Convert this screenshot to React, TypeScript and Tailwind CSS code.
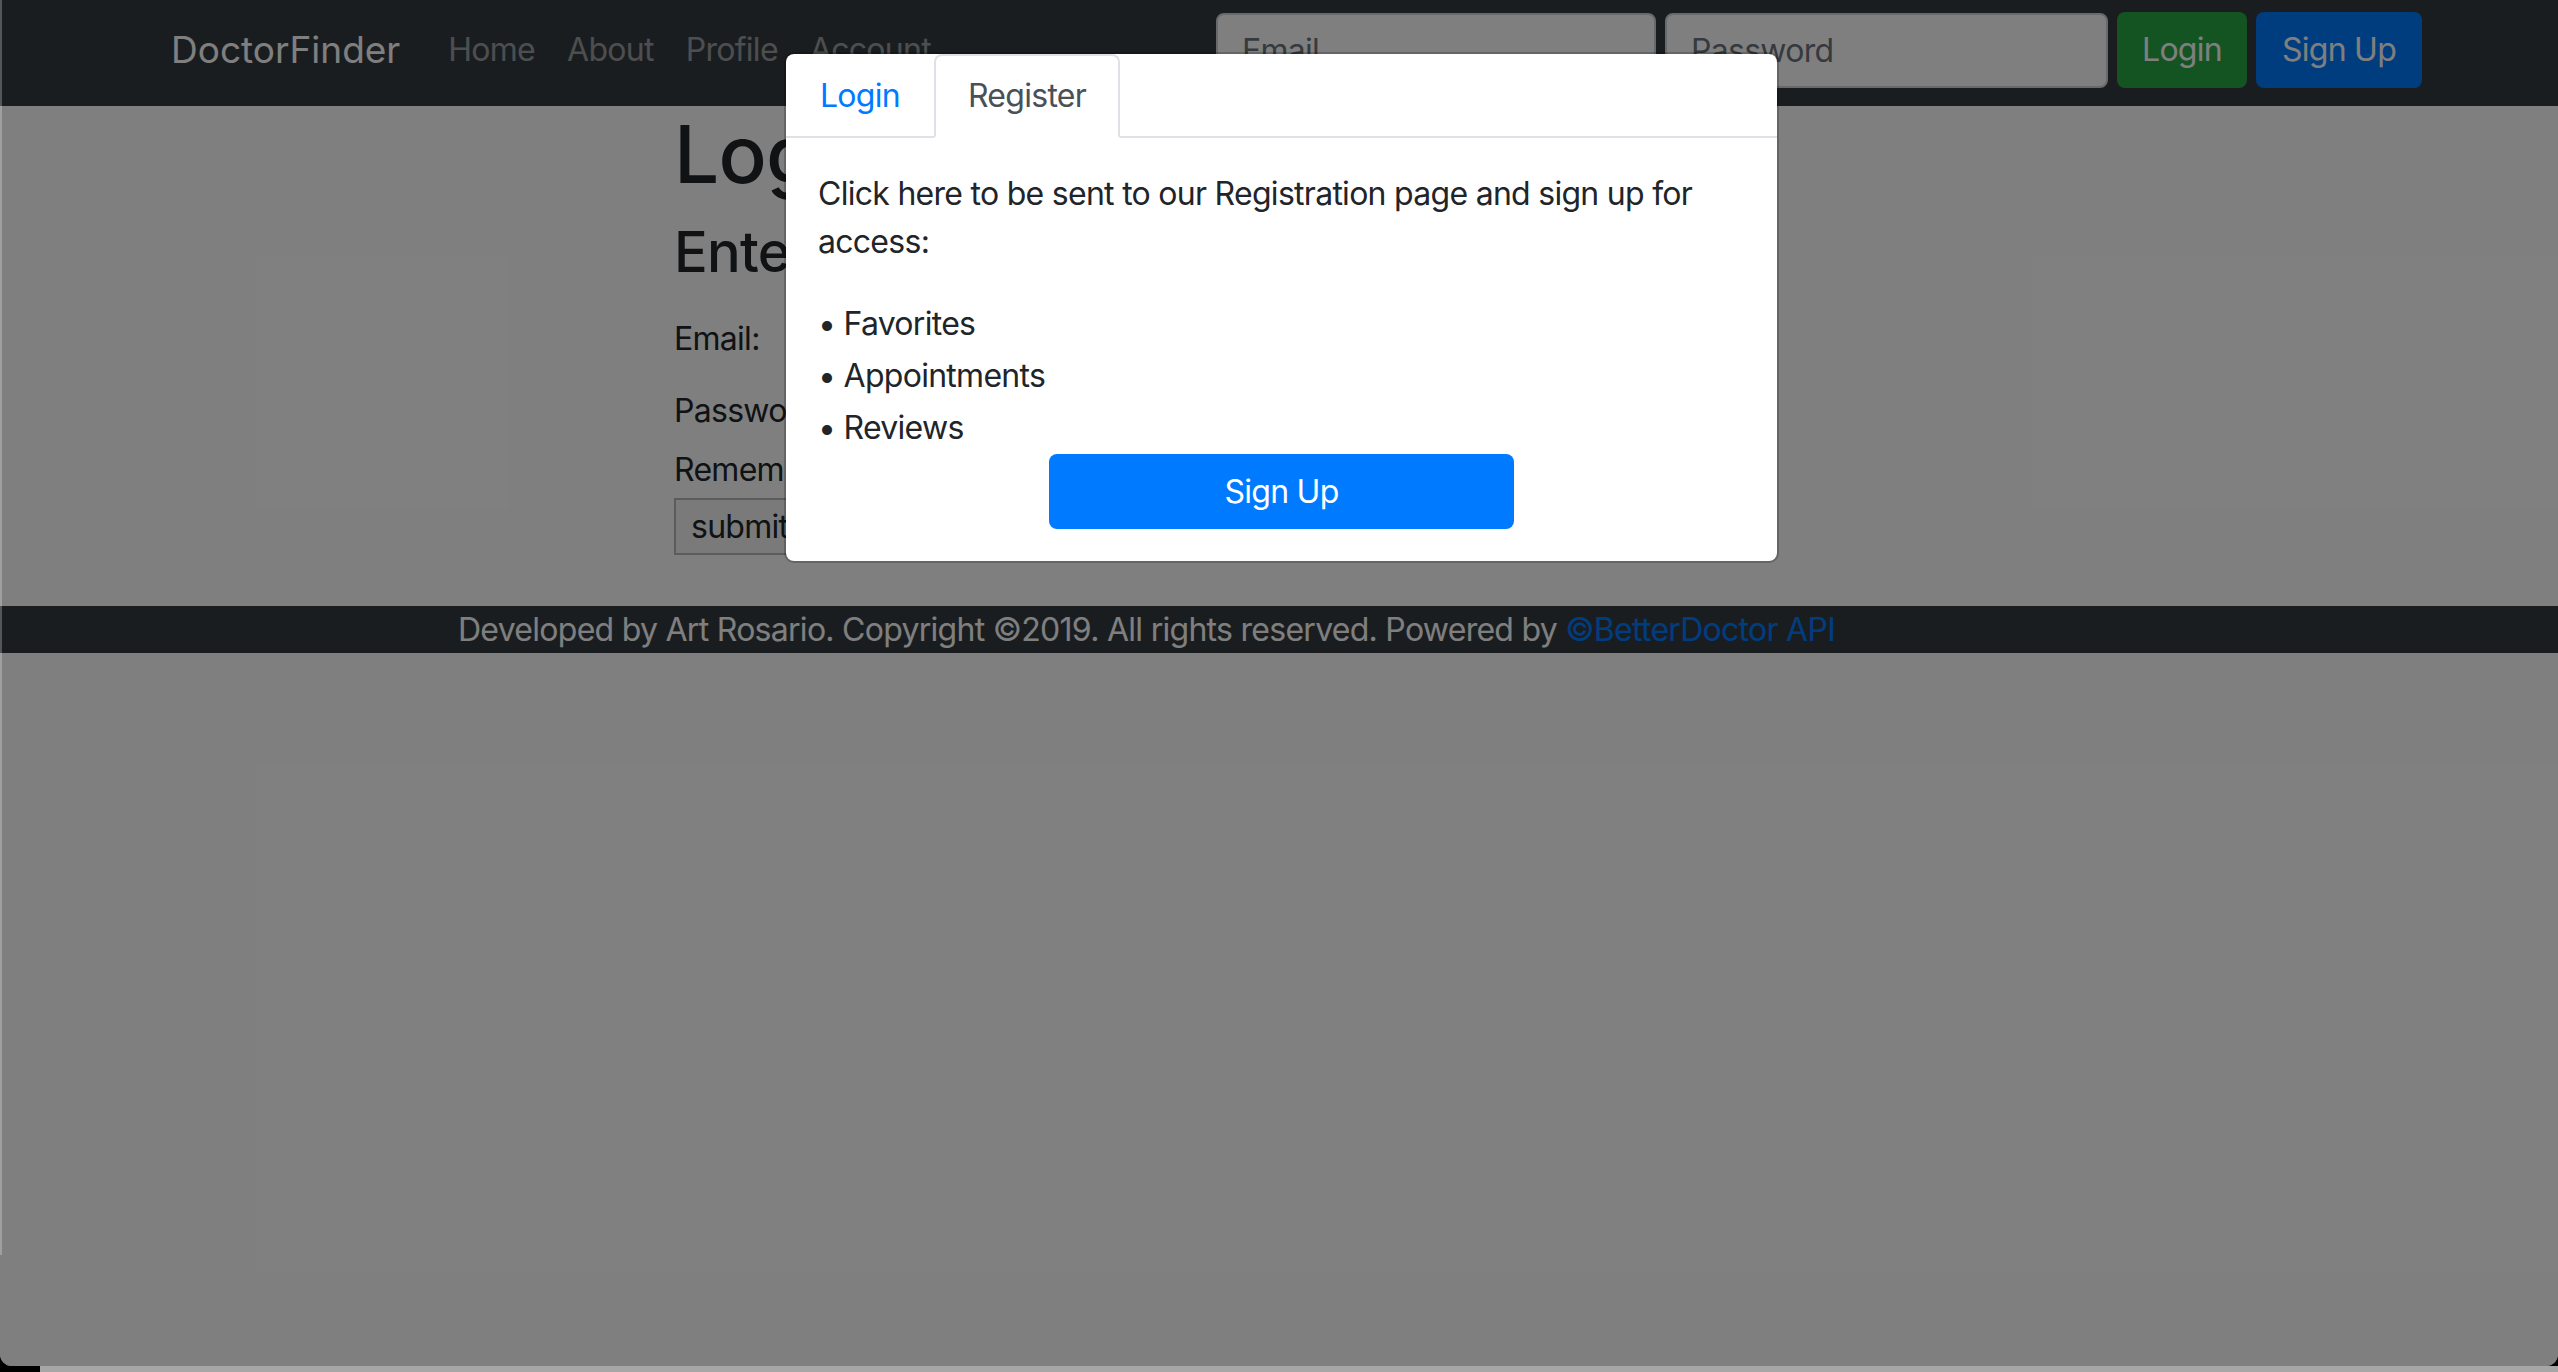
import { memo } from 'react'

const FONT = "font-['Inter',sans-serif] tracking-[-0.045em]"

const NAV_LINKS = ['Home', 'About', 'Profile', 'Account']
const PERKS = ['Favorites', 'Appointments', 'Reviews']

const NavBar = memo(function NavBar() {
  return (
    <nav className="flex h-[106px] items-center bg-[#343a40] pb-[6px] pl-[171px] pr-[136px]">
      <a className="mr-[32px] text-[37px] leading-[48px] tracking-normal text-white">DoctorFinder</a>
      <ul className="flex">
        {NAV_LINKS.map((label) => (
          <li key={label} className="px-[16px] text-[32px] leading-[48px] text-white/50">
            {label}
          </li>
        ))}
      </ul>
      <form className="ml-auto flex items-center gap-[9px]">
        <input
          placeholder="Email"
          className="h-[75px] w-[440px] rounded-[8px] border-2 border-[#ced4da] bg-white px-[24px] text-[32px] text-[#495057] placeholder:text-[#6c757d]"
        />
        <input
          placeholder="Password"
          className="h-[75px] w-[443px] rounded-[8px] border-2 border-[#ced4da] bg-white px-[24px] text-[32px] text-[#495057] placeholder:text-[#6c757d]"
        />
        <button type="button" className="h-[76px] w-[130px] rounded-[8px] bg-[#28a745] text-[32px] text-white">
          Login
        </button>
        <button type="button" className="h-[76px] w-[166px] rounded-[8px] bg-[#007bff] text-[32px] text-white">
          Sign Up
        </button>
      </form>
    </nav>
  )
})

const LoginPage = memo(function LoginPage() {
  return (
    <main className="pl-[674px] text-[#212529]">
      <h1 className="mb-[17px] text-[80px] font-medium leading-[96px]">Login</h1>
      <h3 className="text-[56px] font-medium leading-[67px]">Enter your credentials</h3>

      <div className="mt-[29px] flex h-[48px] items-center text-[32px]">
        <label>Email:</label>
        <input className="ml-[40px] h-[48px] w-[400px] border-2 border-[#767676]" />
      </div>
      <div className="mt-[24px] flex h-[48px] items-center text-[32px]">
        <label>Password:</label>
        <input type="password" className="ml-[40px] h-[48px] w-[400px] border-2 border-[#767676]" />
      </div>
      <div className="mt-[11px] flex h-[48px] items-center text-[32px]">
        <label>Remember me:</label>
        <input type="checkbox" className="ml-[16px] size-[26px]" />
      </div>
      <button
        type="button"
        className="mt-[4px] h-[57px] w-[170px] border-2 border-[#b8b8b8] bg-[#f4f4f4] pl-[15px] text-left text-[32px] text-[#212529]"
      >
        submit
      </button>
    </main>
  )
})

const Footer = memo(function Footer() {
  return (
    <footer className="mt-[51px] h-[47px] bg-[#343a40] pl-[458px] text-[32px] leading-[47px] text-white">
      Developed by Art Rosario. Copyright ©2019. All rights reserved. Powered by{' '}
      <a className="text-[#007bff]">©BetterDoctor API</a>
    </footer>
  )
})

const RegisterModal = memo(function RegisterModal() {
  return (
    <div className="absolute left-[784px] top-[52px] w-[995px] rounded-[10px] border-2 border-black/20 bg-white bg-clip-padding">
      <ul className="flex border-b-2 border-[#dee2e6] text-[32px] leading-[48px]">
        <li className="-mb-[2px] rounded-t-[8px] border-2 border-transparent px-[32px] py-[16px] text-[#007bff]">
          Login
        </li>
        <li className="-mb-[2px] rounded-t-[8px] border-2 border-[#dee2e6] border-b-white bg-white px-[32px] py-[16px] text-[#495057]">
          Register
        </li>
      </ul>
      <div className="p-[32px] text-[32px] text-[#212529]">
        <p className="mb-[32px] leading-[48px]">
          Click here to be sent to our Registration page and sign up for access:
        </p>
        <ul>
          {PERKS.map((perk) => (
            <li key={perk} className="leading-[52px]">
              • {perk}
            </li>
          ))}
        </ul>
        <button
          type="button"
          className="mx-auto block h-[75px] w-[465px] rounded-[8px] bg-[#007bff] text-[32px] text-white"
        >
          Sign Up
        </button>
      </div>
    </div>
  )
})

export default function App() {
  return (
    <div className={`${FONT} relative h-[1372px] overflow-hidden bg-black`}>
      <div className="relative h-[1366px] overflow-hidden rounded-b-[12px] bg-white">
        <NavBar />
        <LoginPage />
        <Footer />

        <div className="absolute inset-0 bg-black/50" />
        <RegisterModal />
      </div>
      <div className="ml-[40px] h-[6px] bg-[#a6a6a6]" />
      <div className="absolute left-0 top-0 h-[1255px] w-[2px] bg-white/25" />
    </div>
  )
}
